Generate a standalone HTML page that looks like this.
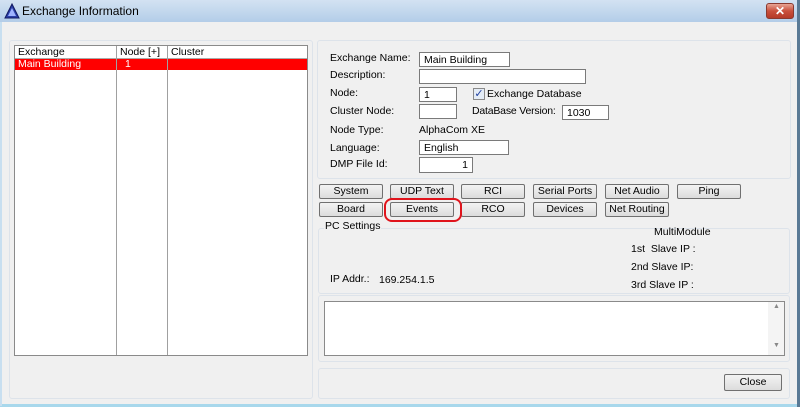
<!DOCTYPE html><html><head><style>
body{margin:0;width:800px;height:407px;overflow:hidden;background:#f0f0f0;font-family:"Liberation Sans",sans-serif;font-size:10.5px;color:#000;position:relative}
.a{position:absolute}
.tb{left:0;top:0;width:800px;height:22px;background:linear-gradient(#d3e2f2,#b3cde8);}
.in{position:absolute;background:#fff;border:1px solid #7a7a7a;box-sizing:border-box;padding:2px 4px;font-size:10.5px;line-height:11px}
.grp{position:absolute;border:1px solid #dde3ea;border-radius:3px;box-sizing:border-box}
.btn{position:absolute;height:15px;width:64px;box-sizing:border-box;border:1px solid #707070;border-radius:2px;background:linear-gradient(#f3f3f3,#dcdcdc);text-align:center;font-size:10.5px;line-height:13px}
.l{position:absolute;font-size:10.5px}
</style></head><body>
<div class="a tb"></div>
<svg class="a" style="left:4px;top:3px" width="16" height="16"><polygon points="8,1 15,15 1,15" fill="#2b3fa8" stroke="#101860"/><polygon points="8,5 12,13 4,13" fill="#9fb3ff"/></svg>
<div class="l" style="left:22px;top:4px;font-size:12px">Exchange Information</div>
<div class="a" style="left:766px;top:3px;width:28px;height:16px;border:1px solid #8a3a30;border-radius:3px;box-sizing:border-box;background:linear-gradient(#e8a595,#c9503c 50%,#b53a28);color:#fff;font-weight:bold;text-align:center;font-size:12px;line-height:14px">✕</div>
<div class="a" style="left:797px;top:0;width:3px;height:407px;background:#5a7a95"></div>
<div class="a" style="left:0;top:404px;width:797px;height:3px;background:#a8d8ec"></div>
<div class="a" style="left:0;top:22px;width:2px;height:384px;background:#c8dff0"></div>

<div class="grp" style="left:9px;top:40px;width:304px;height:359px"></div>
<div class="a" style="left:14px;top:45px;width:294px;height:311px;background:#fff;border:1px solid #8a8a8a;box-sizing:border-box"></div>
<div class="a" style="left:15px;top:46px;width:292px;height:12px;background:#fff;border-bottom:1px solid #aaa"></div>
<div class="a" style="left:15px;top:59px;width:292px;height:11px;background:#ff0000"></div>
<div class="a" style="left:116px;top:46px;width:1px;height:309px;background:#a0a0a0"></div>
<div class="a" style="left:167px;top:46px;width:1px;height:309px;background:#a0a0a0"></div>
<div class="l" style="left:18px;top:46px">Exchange</div>
<div class="l" style="left:120px;top:46px">Node [+]</div>
<div class="l" style="left:171px;top:46px">Cluster</div>
<div class="l" style="left:18px;top:58px;color:#fff">Main Building</div>
<div class="l" style="left:125px;top:58px;color:#fff">1</div>

<div class="grp" style="left:317px;top:40px;width:474px;height:139px"></div>
<div class="l" style="left:330px;top:52px">Exchange Name:</div>
<div class="in" style="left:419px;top:52px;width:91px;height:15px">Main Building</div>
<div class="l" style="left:330px;top:69px">Description:</div>
<div class="in" style="left:419px;top:69px;width:167px;height:15px"></div>
<div class="l" style="left:330px;top:87px">Node:</div>
<div class="in" style="left:419px;top:87px;width:38px;height:15px">1</div>
<div class="a" style="left:473px;top:88px;width:12px;height:12px;border:1px solid #8a8a8a;box-sizing:border-box;background:#e4ecf6;color:#2040a0;font-size:11px;line-height:10px;text-align:center">✓</div>
<div class="l" style="left:487px;top:88px">Exchange Database</div>
<div class="l" style="left:330px;top:105px">Cluster Node:</div>
<div class="in" style="left:419px;top:104px;width:38px;height:15px"></div>
<div class="l" style="left:472px;top:105px;letter-spacing:-0.2px">DataBase Version:</div>
<div class="in" style="left:562px;top:105px;width:47px;height:15px">1030</div>
<div class="l" style="left:330px;top:124px">Node Type:</div>
<div class="l" style="left:419px;top:124px">AlphaCom XE</div>
<div class="l" style="left:330px;top:142px">Language:</div>
<div class="in" style="left:419px;top:140px;width:90px;height:15px">English</div>
<div class="l" style="left:330px;top:158px">DMP File Id:</div>
<div class="in" style="left:419px;top:157px;width:54px;height:16px;text-align:right">1</div>

<div class="btn" style="left:319px;top:184px">System</div>
<div class="btn" style="left:390px;top:184px">UDP Text</div>
<div class="btn" style="left:461px;top:184px">RCI</div>
<div class="btn" style="left:533px;top:184px">Serial Ports</div>
<div class="btn" style="left:605px;top:184px">Net Audio</div>
<div class="btn" style="left:677px;top:184px">Ping</div>
<div class="btn" style="left:319px;top:202px">Board</div>
<div class="btn" style="left:390px;top:202px">Events</div>
<div class="btn" style="left:461px;top:202px">RCO</div>
<div class="btn" style="left:533px;top:202px">Devices</div>
<div class="btn" style="left:605px;top:202px">Net Routing</div>
<div class="a" style="left:384px;top:198px;width:78px;height:24px;border:2.5px solid #e0141c;border-radius:8px;box-sizing:border-box"></div>

<div class="grp" style="left:318px;top:228px;width:472px;height:66px"></div>
<div class="l" style="left:324px;top:220px;background:#f0f0f0;padding:0 1px">PC Settings</div>
<div class="l" style="left:654px;top:226px">MultiModule</div>
<div class="l" style="left:631px;top:243px">1st&nbsp; Slave IP :</div>
<div class="l" style="left:631px;top:261px">2nd Slave IP:</div>
<div class="l" style="left:631px;top:279px">3rd Slave IP :</div>
<div class="l" style="left:330px;top:273px">IP Addr.:</div>
<div class="l" style="left:379px;top:274px">169.254.1.5</div>

<div class="grp" style="left:318px;top:295px;width:472px;height:67px"></div>
<div class="a" style="left:324px;top:301px;width:461px;height:55px;background:#fff;border:1px solid #8a8a8a;box-sizing:border-box"></div>
<div class="a" style="left:768px;top:302px;width:16px;height:53px;background:#f4f4f4"></div>
<div class="l" style="left:773px;top:303px;font-size:7px;color:#888">▲</div>
<div class="l" style="left:773px;top:342px;font-size:7px;color:#888">▼</div>

<div class="grp" style="left:318px;top:368px;width:472px;height:31px"></div>
<div class="btn" style="left:724px;top:374px;width:58px;height:17px;line-height:15px">Close</div>
</body></html>
